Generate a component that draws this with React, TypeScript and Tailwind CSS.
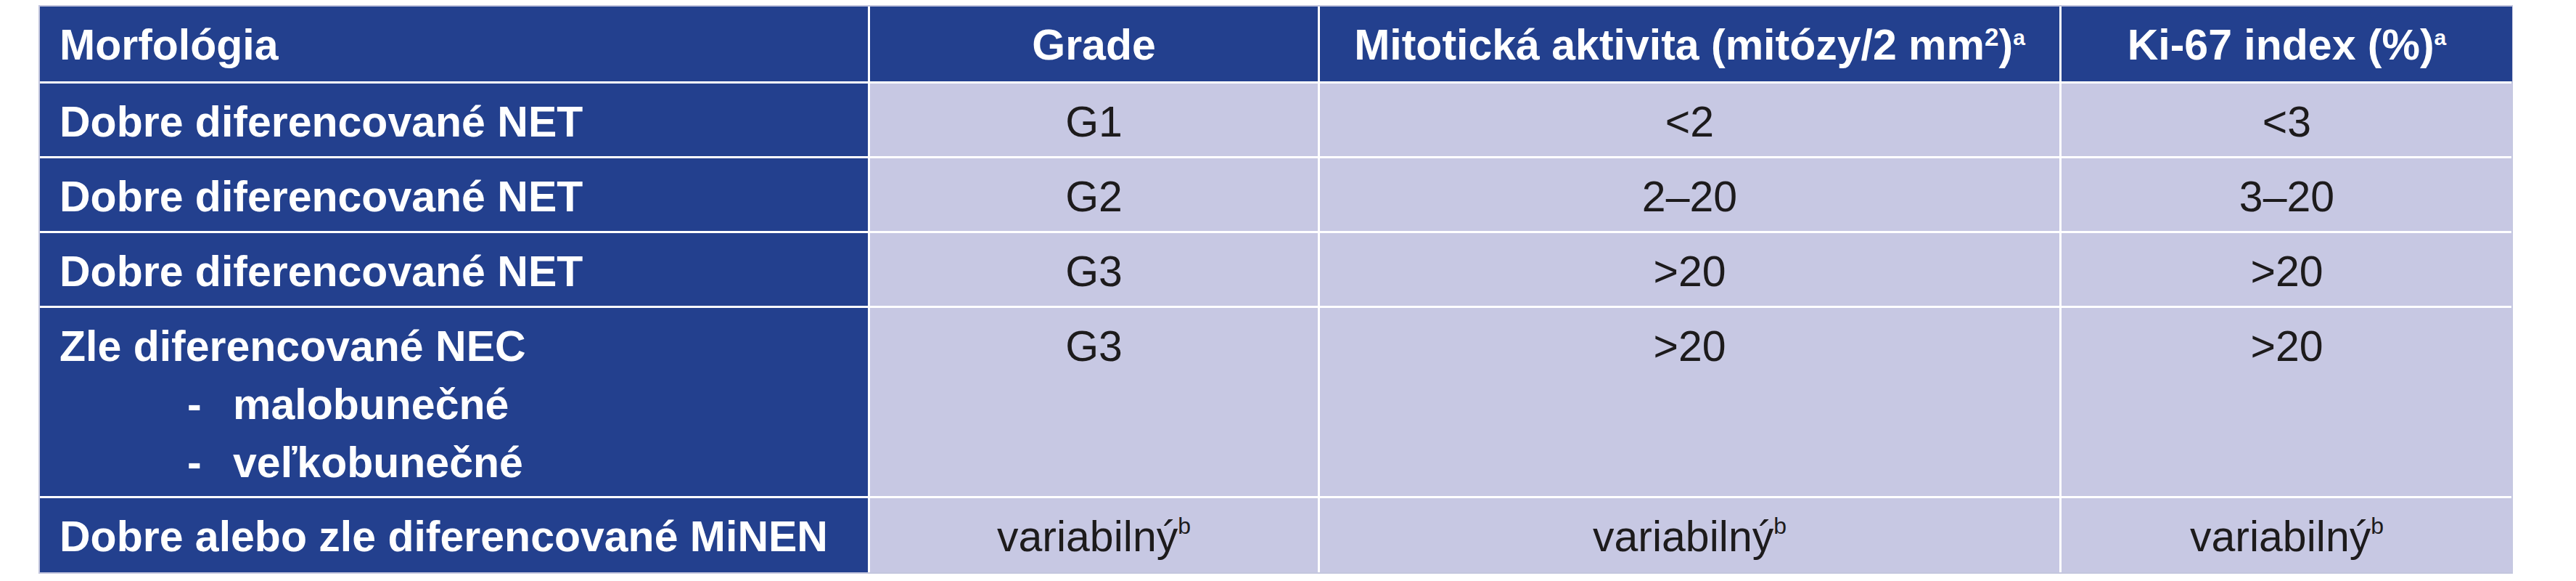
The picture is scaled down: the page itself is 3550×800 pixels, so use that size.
import React from "react";

const BLUE = "bg-[#23408e]";
const LAV = "bg-[#c7c8e3]";

function Sup({ children, cls }: { children: React.ReactNode; cls: string }) {
  return <sup className={cls}>{children}</sup>;
}

function NameCell({ children }: { children: React.ReactNode }) {
  return (
    <div className={`${BLUE} pl-[27px] pt-[13px] text-white font-bold whitespace-nowrap`}>{children}</div>
  );
}

function ValCell({ children }: { children: React.ReactNode }) {
  return (
    <div className={`${LAV} pt-[13px] text-center text-[#1d1b1c] whitespace-nowrap`}>{children}</div>
  );
}

function Variab() {
  return (
    <>
      variabilný
      <Sup cls="text-[32px] relative -top-[24px]">b</Sup>
    </>
  );
}

export default function App() {
  return (
    <div className="w-[3550px] h-[800px] bg-white pl-[53px] pt-[7px] font-['Liberation_Sans',Arial,sans-serif] text-[59px] leading-[80px]">
      <div className="w-[3410px] border-2 border-[#c3c6de] bg-white grid grid-cols-[1141px_617px_1019px_621px] grid-rows-[103px_100px_100px_100px_259px_102px] gap-[3px]">
        {/* header */}
        <div className={`${BLUE} pl-[27px] pt-[13px] text-white font-bold`}>Morfológia</div>
        <div className={`${BLUE} pt-[13px] text-white font-bold text-center`}>Grade</div>
        <div className={`${BLUE} pt-[13px] text-white font-bold text-center whitespace-nowrap`}>
          Mitotická aktivita (mitózy/2 mm
          <Sup cls="text-[35px] relative -top-[19px]">2</Sup>)
          <Sup cls="text-[30px] relative -top-[20px]">a</Sup>
        </div>
        <div className={`${BLUE} pt-[13px] text-white font-bold text-center whitespace-nowrap`}>
          Ki-67 index (%)
          <Sup cls="text-[30px] relative -top-[20px]">a</Sup>
        </div>

        {/* row 1 */}
        <NameCell>Dobre diferencované NET</NameCell>
        <ValCell>G1</ValCell>
        <ValCell>&lt;2</ValCell>
        <ValCell>&lt;3</ValCell>

        {/* row 2 */}
        <NameCell>Dobre diferencované NET</NameCell>
        <ValCell>G2</ValCell>
        <ValCell>2–20</ValCell>
        <ValCell>3–20</ValCell>

        {/* row 3 */}
        <NameCell>Dobre diferencované NET</NameCell>
        <ValCell>G3</ValCell>
        <ValCell>&gt;20</ValCell>
        <ValCell>&gt;20</ValCell>

        {/* row 4 */}
        <NameCell>
          <div>Zle diferencované NEC</div>
          <div className="flex ml-[176px]">
            <span className="w-[63px]">-</span>
            <span>malobunečné</span>
          </div>
          <div className="flex ml-[176px]">
            <span className="w-[63px]">-</span>
            <span>veľkobunečné</span>
          </div>
        </NameCell>
        <ValCell>G3</ValCell>
        <ValCell>&gt;20</ValCell>
        <ValCell>&gt;20</ValCell>

        {/* row 5 */}
        <NameCell>Dobre alebo zle diferencované MiNEN</NameCell>
        <ValCell>
          <Variab />
        </ValCell>
        <ValCell>
          <Variab />
        </ValCell>
        <ValCell>
          <Variab />
        </ValCell>
      </div>
    </div>
  );
}
